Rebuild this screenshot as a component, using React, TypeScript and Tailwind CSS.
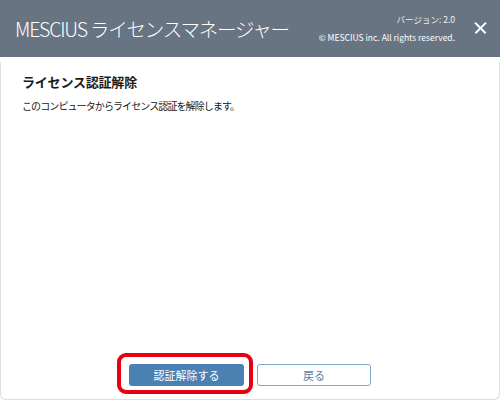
import React from "react";

export default function App() {
  return (
    <div
      className="w-[500px] h-[400px] bg-white flex flex-col overflow-hidden"
      style={{ fontFamily: '"Noto Sans CJK JP", "Noto Sans", sans-serif' }}
    >
      <header className="h-[57px] bg-[#687482] flex items-center pl-[15px] pr-[14px] text-white shrink-0">
        <div className="text-[19.5px] font-light leading-none tracking-[-1.2px] whitespace-nowrap">MESCIUS ライセンスマネージャー</div>
        <div className="ml-auto flex flex-col items-end text-[8.5px] leading-none gap-[9px] mt-[-1px] whitespace-nowrap shrink-0">
          <span className="text-[#eef0f3]">バージョン: 2.0</span>
          <span>© MESCIUS inc. All rights reserved.</span>
        </div>
        <div className="relative ml-[20px] mb-[2px] w-[11px] h-[11px] shrink-0">
          <span className="absolute left-[-2px] top-[5px] w-[15px] h-[1.5px] bg-white rotate-45" />
          <span className="absolute left-[-2px] top-[5px] w-[15px] h-[1.5px] bg-white -rotate-45" />
        </div>
      </header>
      <div className="flex-1 pt-[5px] flex flex-col">
        <div className="flex-1 flex flex-col border-x border-b border-[#dedede] rounded-b-[6px] px-[21px] pt-[10px] pb-[13px]">
          <h1 className="text-[13px] font-bold leading-[20px] text-[#1a1a1a] tracking-[-0.2px]">ライセンス認証解除</h1>
          <p className="mt-[7px] text-[10px] leading-[14px] text-[#1a1a1a] tracking-[-0.9px]">
            このコンピュータからライセンス認証を解除します。
          </p>
          <div className="flex-1" />
          <div className="flex justify-center gap-[13px]">
            <div className="relative">
              <button className="w-[115px] h-[22px] rounded-[3px] bg-[#4a80b2] text-white text-[11px] leading-none flex items-center justify-center">
                認証解除する
              </button>
              <span className="absolute left-[-12px] right-[-9px] top-[-11px] bottom-[-8px] border-[4px] border-[#e60012] rounded-[9px] pointer-events-none" />
            </div>
            <button className="w-[114px] h-[22px] rounded-[3px] bg-white border border-[#7ea6cf] text-[#5b80a8] text-[11px] leading-none flex items-center justify-center">
              戻る
            </button>
          </div>
        </div>
      </div>
    </div>
  );
}
